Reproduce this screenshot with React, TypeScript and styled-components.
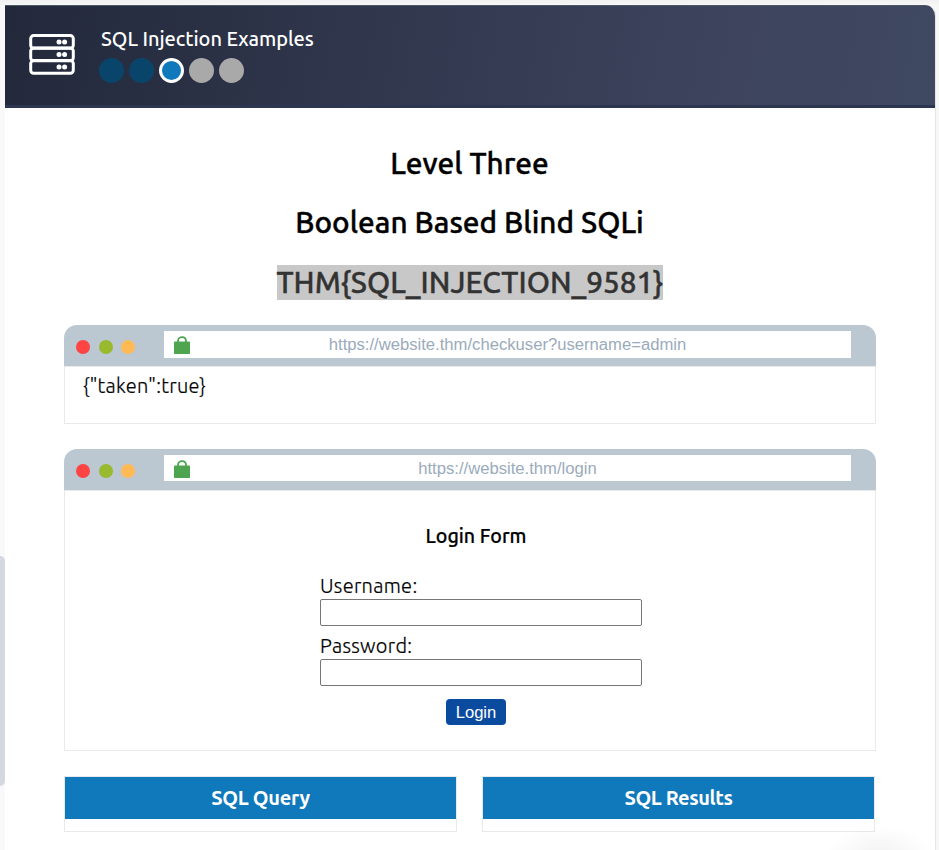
import React from "react";
import styled, { createGlobalStyle } from "styled-components";

const GlobalStyle = createGlobalStyle`
  * { box-sizing: border-box; }
  html, body { margin: 0; padding: 0; background: #f7f7f7; overflow: hidden; }
  body { font-family: Ubuntu, "Noto Sans", "Open Sans", sans-serif; color: #000; }
`;

const Page = styled.div`
  display: flex;
  width: 939px;
  height: 850px;
  padding-top: 5px;
  overflow: hidden;
  background: linear-gradient(#f1f1f1, #f7f7f7 5px);
`;

const ScrollTrack = styled.div`
  width: 5px;
  height: 845px;
  padding-top: 551px;
  background: #f9f9fc;
`;

const ScrollThumb = styled.div`
  height: 230px;
  border-radius: 0 5px 5px 0;
  background: #d4d9e1;
`;

const Card = styled.main`
  position: relative;
  width: 931px;
  height: 845px;
  overflow: hidden;
  border-right: 1px solid #e6e6e6;
  border-radius: 0 11px 0 0;
  background: #fff;
`;

const Header = styled.header`
  display: flex;
  height: 103px;
  padding: 28px 0 0 24px;
  border-top: 1px solid #4c5967;
  border-bottom: 3px solid #2c3651;
  background: linear-gradient(100deg, #23293b, #3d435c 75%, #3f4961);
`;

const ServerIcon = styled.svg`
  display: block;
  width: 46px;
  height: 41px;
  margin-right: 24px;
`;

const HeaderInfo = styled.div`
  margin-top: -7px;
`;

const Label = styled.span<{ $spacing?: number }>`
  display: inline-block;
  white-space: nowrap;
  letter-spacing: ${(p) => p.$spacing ?? 0}px;
`;

const Title = styled.h1`
  height: 24px;
  margin: 0 0 0 2px;
  font-size: 20px;
  line-height: 24px;
  font-weight: 500;
  color: #fff;
`;

const Steps = styled.div`
  display: flex;
  gap: 5px;
  margin-top: 7px;
`;

const Step = styled.span<{ $state: "done" | "current" | "todo" }>`
  width: 25px;
  height: 25px;
  border-radius: 50%;
  border: ${(p) => (p.$state === "current" ? "3px solid #fff" : "0")};
  background: ${(p) => ({ done: "#09456a", current: "#1079bb", todo: "#a9a9a9" })[p.$state]};
`;

const Content = styled.div`
  padding: 38px 60px 0 59px;
`;

const Heading = styled.h2<{ $gap: number }>`
  height: 35px;
  margin: 0 0 ${(p) => p.$gap}px;
  text-align: center;
  font-size: 29.75px;
  line-height: 35px;
  font-weight: 500;
  -webkit-text-stroke: 0.4px currentColor;
`;

const Flag = styled.span`
  display: inline-block;
  width: 386px;
  height: 35px;
  background: #c8c8c8;
  color: #333;
  white-space: nowrap;
`;

const Browser = styled.section<{ $height: number }>`
  width: 812px;
  height: ${(p) => p.$height}px;
  margin-bottom: 25px;
`;

const BrowserBar = styled.div`
  display: flex;
  height: 41px;
  padding: 6px 25px 0 12px;
  border-radius: 13px 13px 0 0;
  background: #bbc7d1;
`;

const Dots = styled.div<{ $tall: boolean }>`
  display: flex;
  gap: 8.5px;
  width: 88px;
  padding-top: ${(p) => (p.$tall ? 9 : 8.5)}px;
`;

const Dot = styled.span<{ $color: string }>`
  width: 14px;
  height: 14px;
  border-radius: 50%;
  background: ${(p) => p.$color};
`;

const UrlField = styled.div<{ $tall: boolean }>`
  display: grid;
  grid-template-columns: 26px 1fr 26px;
  width: 687px;
  height: ${(p) => (p.$tall ? 27 : 26)}px;
  background: #fff;
`;

const LockIcon = styled.svg`
  width: 16px;
  height: 18px;
  margin: 5px 0 0 10px;
`;

const Url = styled.span`
  text-align: center;
  font: 16.65px/27px "Liberation Sans", Arial, sans-serif;
  color: #9aabbc;
`;

const BrowserBody = styled.div`
  height: calc(100% - 41px);
  border: 1px solid #e9e9e9;
`;

const Response = styled.div`
  padding: 7px 0 0 18px;
  font-size: 20px;
  line-height: 24px;
  font-weight: 300;
  -webkit-text-stroke: 0.2px currentColor;
`;

const LoginForm = styled.form`
  display: flex;
  flex-direction: column;
  width: 322px;
  margin-left: 255px;
`;

const FormTitle = styled.h3`
  height: 24px;
  margin: 33px 0 26px;
  padding-right: 10px;
  text-align: center;
  font-size: 19.6px;
  line-height: 24px;
  font-weight: 500;
  -webkit-text-stroke: 0.2px currentColor;
`;

const FieldLabel = styled.label`
  height: 25px;
  font-size: 20px;
  line-height: 24px;
  font-weight: 300;
  -webkit-text-stroke: 0.2px currentColor;
`;

const Field = styled.input`
  width: 322px;
  height: 27px;
  margin: 0 0 8px;
  border: 1px solid #767676;
  border-radius: 2px;
  background: #fff;
`;

const LoginButton = styled.button`
  width: 60px;
  height: 26px;
  margin: 5px 0 0 126px;
  padding: 0;
  border: 0;
  border-radius: 4px;
  background: #0b4b9f;
  color: #fff;
  font: 16.6px/25px "Liberation Sans", Arial, sans-serif;
`;

const Panels = styled.div`
  display: grid;
  grid-template-columns: 393px 393px;
  gap: 25px;
`;

const Panel = styled.section`
  height: 56px;
  border: 1px solid #e9e9e9;
`;

const PanelTitle = styled.h3`
  height: 42px;
  margin: 0;
  background: #1079bb;
  color: #fff;
  text-align: center;
  font-size: 20px;
  line-height: 42px;
  font-weight: 700;
`;

const CornerGlow = styled.div`
  position: absolute;
  right: 0;
  bottom: 0;
  width: 120px;
  height: 32px;
  background: radial-gradient(ellipse 55px 30px at 65px 38px, rgba(0, 0, 0, 0.05), transparent);
`;

const BrowserWindow = ({
  url,
  height,
  tall = false,
  children,
}: {
  url: string;
  height: number;
  tall?: boolean;
  children: React.ReactNode;
}) => (
  <Browser $height={height}>
    <BrowserBar>
      <Dots $tall={tall}>
        <Dot $color="#ff4444" />
        <Dot $color="#99b92f" />
        <Dot $color="#ffb955" />
      </Dots>
      <UrlField $tall={tall}>
        <LockIcon viewBox="0 0 16 18">
          <path d="M4 6V5C4 -.2 12 -.2 12 5v1" fill="none" stroke="#4fa450" strokeWidth="1.8" />
          <rect y="5.5" width="16" height="12.5" rx="0.8" fill="#4fa450" />
        </LockIcon>
        <Url>{url}</Url>
      </UrlField>
    </BrowserBar>
    <BrowserBody>{children}</BrowserBody>
  </Browser>
);

const rackRows = [1.6, 14.1, 26.6];

export default function App() {
  return (
    <>
      <GlobalStyle />
      <Page>
        <ScrollTrack>
          <ScrollThumb />
        </ScrollTrack>
        <Card>
          <Header>
            <ServerIcon viewBox="0 0 46 41">
              {rackRows.map((y) => (
                <g key={y}>
                  <rect x="1.7" y={y} width="42.6" height="12.7" rx="3" fill="none" stroke="#fff" strokeWidth="3" />
                  <circle cx="30" cy={y + 6.5} r="2.5" fill="#fff" />
                  <circle cx="35.6" cy={y + 6.5} r="2.5" fill="#fff" />
                </g>
              ))}
            </ServerIcon>
            <HeaderInfo>
              <Title>
                <Label $spacing={-0.04}>SQL Injection Examples</Label>
              </Title>
              <Steps>
                <Step $state="done" />
                <Step $state="done" />
                <Step $state="current" />
                <Step $state="todo" />
                <Step $state="todo" />
              </Steps>
            </HeaderInfo>
          </Header>
          <Content>
            <Heading $gap={24}>
              <Label>Level Three</Label>
            </Heading>
            <Heading $gap={25}>
              <Label>Boolean Based Blind SQLi</Label>
            </Heading>
            <Heading $gap={25}>
              <Flag>
                <Label>{"THM{SQL_INJECTION_9581}"}</Label>
              </Flag>
            </Heading>
            <BrowserWindow url="https://website.thm/checkuser?username=admin" height={99} tall>
              <Response>
                <Label $spacing={0.3}>{'{"taken":true}'}</Label>
              </Response>
            </BrowserWindow>
            <BrowserWindow url="https://website.thm/login" height={302}>
              <LoginForm onSubmit={(e) => e.preventDefault()}>
                <FormTitle>
                  <Label>Login Form</Label>
                </FormTitle>
                <FieldLabel htmlFor="username">
                  <Label $spacing={0.3}>Username:</Label>
                </FieldLabel>
                <Field id="username" />
                <FieldLabel htmlFor="password">
                  <Label $spacing={0.3}>Password:</Label>
                </FieldLabel>
                <Field id="password" type="password" />
                <LoginButton>Login</LoginButton>
              </LoginForm>
            </BrowserWindow>
            <Panels>
              <Panel>
                <PanelTitle>
                  <Label $spacing={-0.3}>SQL Query</Label>
                </PanelTitle>
              </Panel>
              <Panel>
                <PanelTitle>
                  <Label $spacing={-0.4}>SQL Results</Label>
                </PanelTitle>
              </Panel>
            </Panels>
          </Content>
          <CornerGlow />
        </Card>
      </Page>
    </>
  );
}
